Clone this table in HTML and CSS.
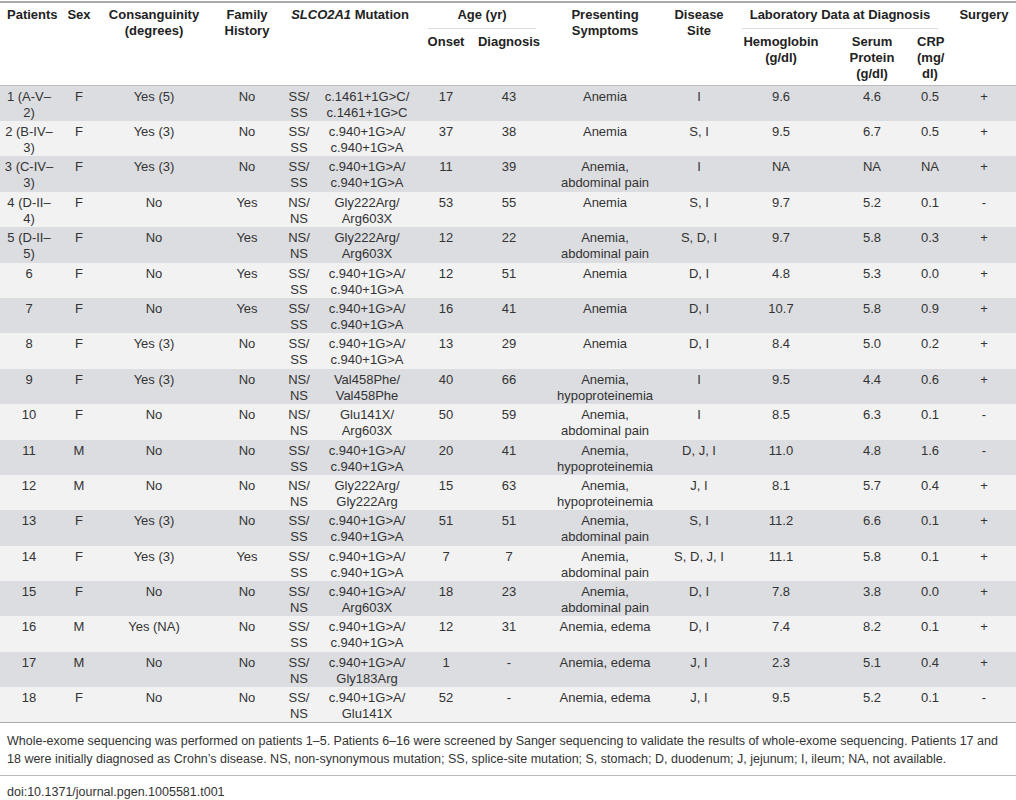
FILE: index.html
```html
<!DOCTYPE html>
<html lang="en">
<head>
<meta charset="UTF-8"/>
<title>Table 1 — Clinical characteristics</title>
<link rel="stylesheet" href="styles.css">
</head>
<body>

<table class="data">
  <colgroup>
    <col style="width:62px"><col style="width:34px"><col style="width:116px"><col style="width:70px">
    <col style="width:34px"><col style="width:102px"><col style="width:56px"><col style="width:70px">
    <col style="width:122px"><col style="width:66px"><col style="width:98px"><col style="width:84px">
    <col style="width:32px"><col style="width:70px">
  </colgroup>
  <thead>
    <tr>
      <th rowspan="2" class="first">Patients</th>
      <th rowspan="2">Sex</th>
      <th rowspan="2">Consanguinity<br>(degrees)</th>
      <th rowspan="2">Family<br>History</th>
      <th rowspan="2" colspan="2"><i>SLCO2A1</i> Mutation</th>
      <th colspan="2" class="group"><div>Age (yr)</div></th>
      <th rowspan="2">Presenting<br>Symptoms</th>
      <th rowspan="2">Disease<br>Site</th>
      <th colspan="3" class="group"><div>Laboratory Data at Diagnosis</div></th>
      <th rowspan="2" class="last">Surgery</th>
    </tr>
    <tr class="sub">
      <th>Onset</th>
      <th>Diagnosis</th>
      <th>Hemoglobin<br>(g/dl)</th>
      <th>Serum<br>Protein<br>(g/dl)</th>
      <th class="crp">CRP<br>(mg/<br>dl)</th>
    </tr>
  </thead>
  <tbody>
    <tr><td class="first">1 (A-V–2)</td><td>F</td><td>Yes (5)</td><td>No</td><td>SS/<br>SS</td><td>c.1461+1G&gt;C/<br>c.1461+1G&gt;C</td><td>17</td><td>43</td><td>Anemia</td><td>I</td><td>9.6</td><td>4.6</td><td class="crp">0.5</td><td class="last">+</td></tr>
    <tr><td class="first">2 (B-IV–3)</td><td>F</td><td>Yes (3)</td><td>No</td><td>SS/<br>SS</td><td>c.940+1G&gt;A/<br>c.940+1G&gt;A</td><td>37</td><td>38</td><td>Anemia</td><td>S, I</td><td>9.5</td><td>6.7</td><td class="crp">0.5</td><td class="last">+</td></tr>
    <tr><td class="first">3 (C-IV–3)</td><td>F</td><td>Yes (3)</td><td>No</td><td>SS/<br>SS</td><td>c.940+1G&gt;A/<br>c.940+1G&gt;A</td><td>11</td><td>39</td><td>Anemia,<br>abdominal pain</td><td>I</td><td>NA</td><td>NA</td><td class="crp">NA</td><td class="last">+</td></tr>
    <tr><td class="first">4 (D-II–4)</td><td>F</td><td>No</td><td>Yes</td><td>NS/<br>NS</td><td>Gly222Arg/<br>Arg603X</td><td>53</td><td>55</td><td>Anemia</td><td>S, I</td><td>9.7</td><td>5.2</td><td class="crp">0.1</td><td class="last">-</td></tr>
    <tr><td class="first">5 (D-II–5)</td><td>F</td><td>No</td><td>Yes</td><td>NS/<br>NS</td><td>Gly222Arg/<br>Arg603X</td><td>12</td><td>22</td><td>Anemia,<br>abdominal pain</td><td>S, D, I</td><td>9.7</td><td>5.8</td><td class="crp">0.3</td><td class="last">+</td></tr>
    <tr><td class="first">6</td><td>F</td><td>No</td><td>Yes</td><td>SS/<br>SS</td><td>c.940+1G&gt;A/<br>c.940+1G&gt;A</td><td>12</td><td>51</td><td>Anemia</td><td>D, I</td><td>4.8</td><td>5.3</td><td class="crp">0.0</td><td class="last">+</td></tr>
    <tr><td class="first">7</td><td>F</td><td>No</td><td>Yes</td><td>SS/<br>SS</td><td>c.940+1G&gt;A/<br>c.940+1G&gt;A</td><td>16</td><td>41</td><td>Anemia</td><td>D, I</td><td>10.7</td><td>5.8</td><td class="crp">0.9</td><td class="last">+</td></tr>
    <tr><td class="first">8</td><td>F</td><td>Yes (3)</td><td>No</td><td>SS/<br>SS</td><td>c.940+1G&gt;A/<br>c.940+1G&gt;A</td><td>13</td><td>29</td><td>Anemia</td><td>D, I</td><td>8.4</td><td>5.0</td><td class="crp">0.2</td><td class="last">+</td></tr>
    <tr><td class="first">9</td><td>F</td><td>Yes (3)</td><td>No</td><td>NS/<br>NS</td><td>Val458Phe/<br>Val458Phe</td><td>40</td><td>66</td><td>Anemia,<br>hypoproteinemia</td><td>I</td><td>9.5</td><td>4.4</td><td class="crp">0.6</td><td class="last">+</td></tr>
    <tr><td class="first">10</td><td>F</td><td>No</td><td>No</td><td>NS/<br>NS</td><td>Glu141X/<br>Arg603X</td><td>50</td><td>59</td><td>Anemia,<br>abdominal pain</td><td>I</td><td>8.5</td><td>6.3</td><td class="crp">0.1</td><td class="last">-</td></tr>
    <tr><td class="first">11</td><td>M</td><td>No</td><td>No</td><td>SS/<br>SS</td><td>c.940+1G&gt;A/<br>c.940+1G&gt;A</td><td>20</td><td>41</td><td>Anemia,<br>hypoproteinemia</td><td>D, J, I</td><td>11.0</td><td>4.8</td><td class="crp">1.6</td><td class="last">-</td></tr>
    <tr><td class="first">12</td><td>M</td><td>No</td><td>No</td><td>NS/<br>NS</td><td>Gly222Arg/<br>Gly222Arg</td><td>15</td><td>63</td><td>Anemia,<br>hypoproteinemia</td><td>J, I</td><td>8.1</td><td>5.7</td><td class="crp">0.4</td><td class="last">+</td></tr>
    <tr><td class="first">13</td><td>F</td><td>Yes (3)</td><td>No</td><td>SS/<br>SS</td><td>c.940+1G&gt;A/<br>c.940+1G&gt;A</td><td>51</td><td>51</td><td>Anemia,<br>abdominal pain</td><td>S, I</td><td>11.2</td><td>6.6</td><td class="crp">0.1</td><td class="last">+</td></tr>
    <tr><td class="first">14</td><td>F</td><td>Yes (3)</td><td>Yes</td><td>SS/<br>SS</td><td>c.940+1G&gt;A/<br>c.940+1G&gt;A</td><td>7</td><td>7</td><td>Anemia,<br>abdominal pain</td><td>S, D, J, I</td><td>11.1</td><td>5.8</td><td class="crp">0.1</td><td class="last">+</td></tr>
    <tr><td class="first">15</td><td>F</td><td>No</td><td>No</td><td>SS/<br>NS</td><td>c.940+1G&gt;A/<br>Arg603X</td><td>18</td><td>23</td><td>Anemia,<br>abdominal pain</td><td>D, I</td><td>7.8</td><td>3.8</td><td class="crp">0.0</td><td class="last">+</td></tr>
    <tr><td class="first">16</td><td>M</td><td>Yes (NA)</td><td>No</td><td>SS/<br>SS</td><td>c.940+1G&gt;A/<br>c.940+1G&gt;A</td><td>12</td><td>31</td><td>Anemia, edema</td><td>D, I</td><td>7.4</td><td>8.2</td><td class="crp">0.1</td><td class="last">+</td></tr>
    <tr><td class="first">17</td><td>M</td><td>No</td><td>No</td><td>SS/<br>NS</td><td>c.940+1G&gt;A/<br>Gly183Arg</td><td>1</td><td>-</td><td>Anemia, edema</td><td>J, I</td><td>2.3</td><td>5.1</td><td class="crp">0.4</td><td class="last">+</td></tr>
    <tr><td class="first">18</td><td>F</td><td>No</td><td>No</td><td>SS/<br>NS</td><td>c.940+1G&gt;A/<br>Glu141X</td><td>52</td><td>-</td><td>Anemia, edema</td><td>J, I</td><td>9.5</td><td>5.2</td><td class="crp">0.1</td><td class="last">-</td></tr>
  </tbody>
</table>

<p class="note">Whole-exome sequencing was performed on patients 1–5. Patients 6–16 were screened by Sanger sequencing to validate the results of whole-exome sequencing. Patients 17 and 18 were initially diagnosed as Crohn’s disease. NS, non-synonymous mutation; SS, splice-site mutation; S, stomach; D, duodenum; J, jejunum; I, ileum; NA, not available.</p>

<p class="doi">doi:10.1371/journal.pgen.1005581.t001</p>

</body>
</html>
```

FILE: styles.css
```css
body { margin:0; font-family:"Liberation Sans",Arial,sans-serif; color:#333; background:#fff; }
.data { width:1016px; table-layout:fixed; border-collapse:collapse; margin-top:1px; border-top:2px solid #aaa; font-size:13px; line-height:16px; }
.data th { font-weight:bold; color:#222; vertical-align:top; text-align:center; padding:4px 3px 0; }
.data thead tr.sub th { padding:5px 3px 3px; }
.data thead { border-bottom:1px solid #bbb; }
.data th.first { text-align:left; padding-left:7px; }
.data th.group div { border-bottom:1px solid #ddd; padding-bottom:5px; margin:0 5px 0 7px; }
.data td { vertical-align:top; text-align:center; padding:3px 3px 0; height:35.4px; box-sizing:border-box; }
.data td.first { padding:3px 8px 0 4px; }
.data .crp { padding-left:2px; padding-right:2px; }
.data .last { padding-left:8px; padding-right:2px; }
.data tbody tr:nth-child(odd) { background:#dcdde0; }
.data tbody tr:nth-child(even) { background:#f2f2f3; }
.data tbody { border-bottom:1px solid #aaa; }
.note { margin:0; padding:9px 7px 7px; font-size:12.5px; line-height:18px; border-bottom:1px solid #bbb; }
.doi { margin:8px 0 0 7px; font-size:12.5px; line-height:16px; }
```
